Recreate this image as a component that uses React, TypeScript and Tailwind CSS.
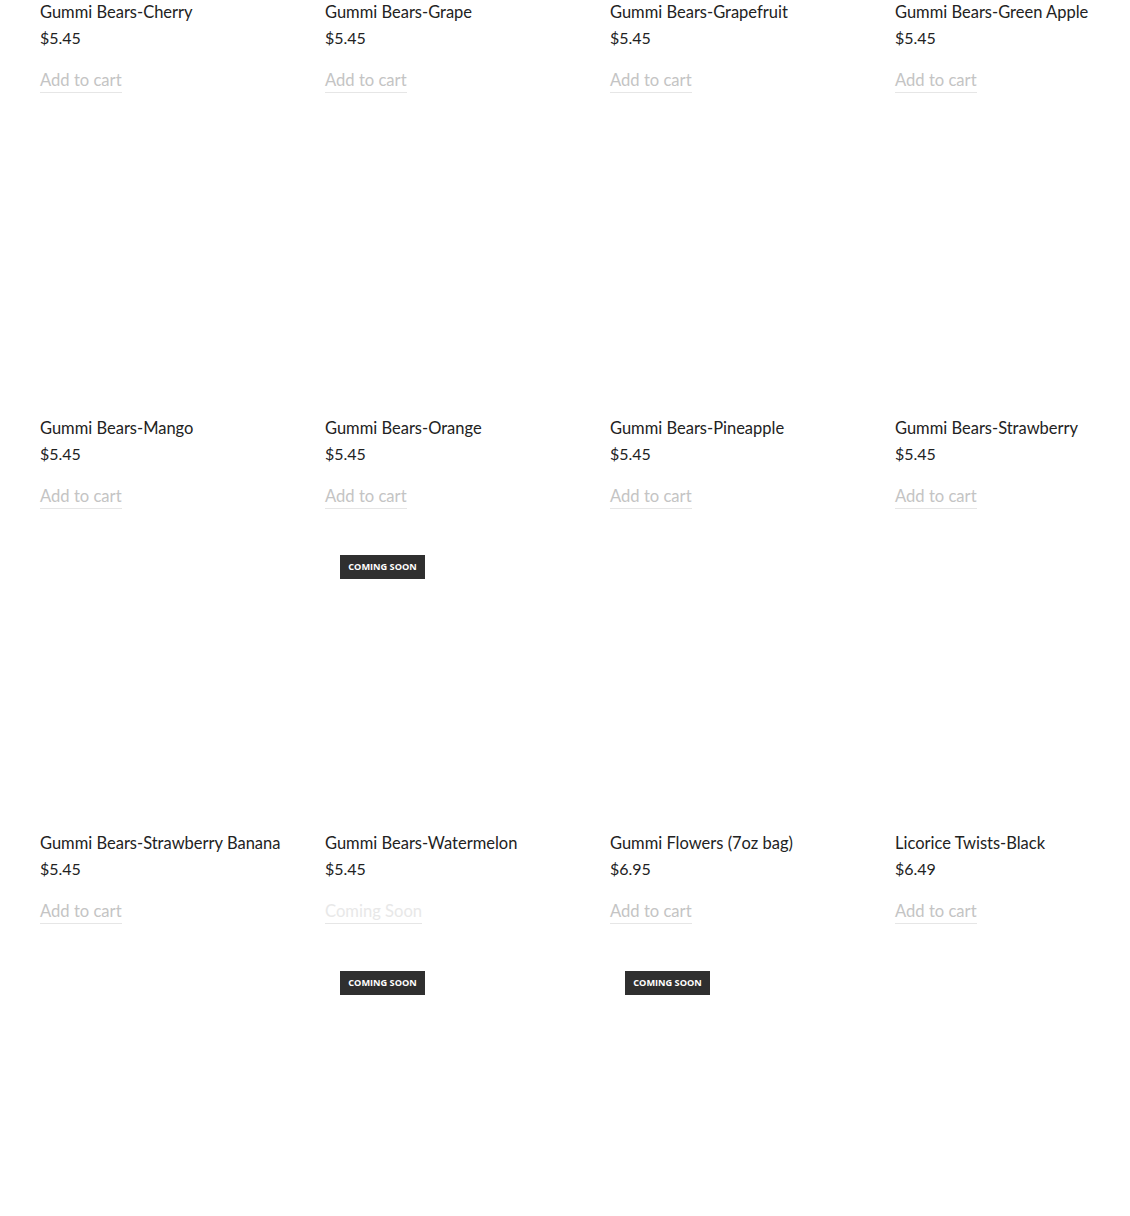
import React from "react";

type Item = { name: string; price?: string; soon?: boolean; badge?: boolean };

const rows: Item[][] = [
  [
    { name: "Gummi Bears-Cherry", price: "$5.45" },
    { name: "Gummi Bears-Grape", price: "$5.45" },
    { name: "Gummi Bears-Grapefruit", price: "$5.45" },
    { name: "Gummi Bears-Green Apple", price: "$5.45" },
  ],
  [
    { name: "Gummi Bears-Mango", price: "$5.45" },
    { name: "Gummi Bears-Orange", price: "$5.45" },
    { name: "Gummi Bears-Pineapple", price: "$5.45" },
    { name: "Gummi Bears-Strawberry", price: "$5.45" },
  ],
  [
    { name: "Gummi Bears-Strawberry Banana", price: "$5.45" },
    { name: "Gummi Bears-Watermelon", price: "$5.45", soon: true, badge: true },
    { name: "Gummi Flowers (7oz bag)", price: "$6.95" },
    { name: "Licorice Twists-Black", price: "$6.49" },
  ],
];

const lastRow: Item[] = [
  { name: "" },
  { name: "", badge: true },
  { name: "", badge: true },
  { name: "" },
];

function Badge() {
  return (
    <div className="absolute left-[15px] top-[15px] flex h-[24px] w-[85px] items-center justify-center bg-[#2f2f2f] text-[9.2px] font-bold uppercase text-white [font-family:'Open_Sans',sans-serif]">
      Coming Soon
    </div>
  );
}

function Info({ item }: { item: Item }) {
  return (
    <div>
      <div className="text-[16.5px] leading-[24px] text-[#222]">{item.name}</div>
      <div className="mt-[2px] text-[16px] leading-[24px] text-[#222]">{item.price}</div>
      <div className="mt-[18px]">
        <span
          className={
            "inline-block border-b border-[#e6e6e6] text-[16.6px] leading-[24px] " +
            (item.soon ? "text-[#e8e8e8]" : "text-[#c4c4c4]")
          }
        >
          {item.soon ? "Coming Soon" : "Add to cart"}
        </span>
      </div>
    </div>
  );
}

export default function App() {
  return (
    <div className="h-[1216px] w-[1130px] overflow-hidden bg-white [font-family:'Lato',sans-serif]">
      <div className="pl-[40px]">
        {rows.map((row, ri) => (
          <div key={ri} className="grid grid-cols-[255px_255px_255px_255px] gap-x-[30px]">
            {row.map((item, i) => (
              <div key={i} className="pb-[31.5px]">
                {ri > 0 && (
                  <div className="relative mb-[15px] h-[276px]">{item.badge && <Badge />}</div>
                )}
                <Info item={item} />
              </div>
            ))}
          </div>
        ))}
        <div className="grid grid-cols-[255px_255px_255px_255px] gap-x-[30px]">
          {lastRow.map((item, i) => (
            <div key={i} className="relative h-[276px]">
              {item.badge && <Badge />}
            </div>
          ))}
        </div>
      </div>
    </div>
  );
}
